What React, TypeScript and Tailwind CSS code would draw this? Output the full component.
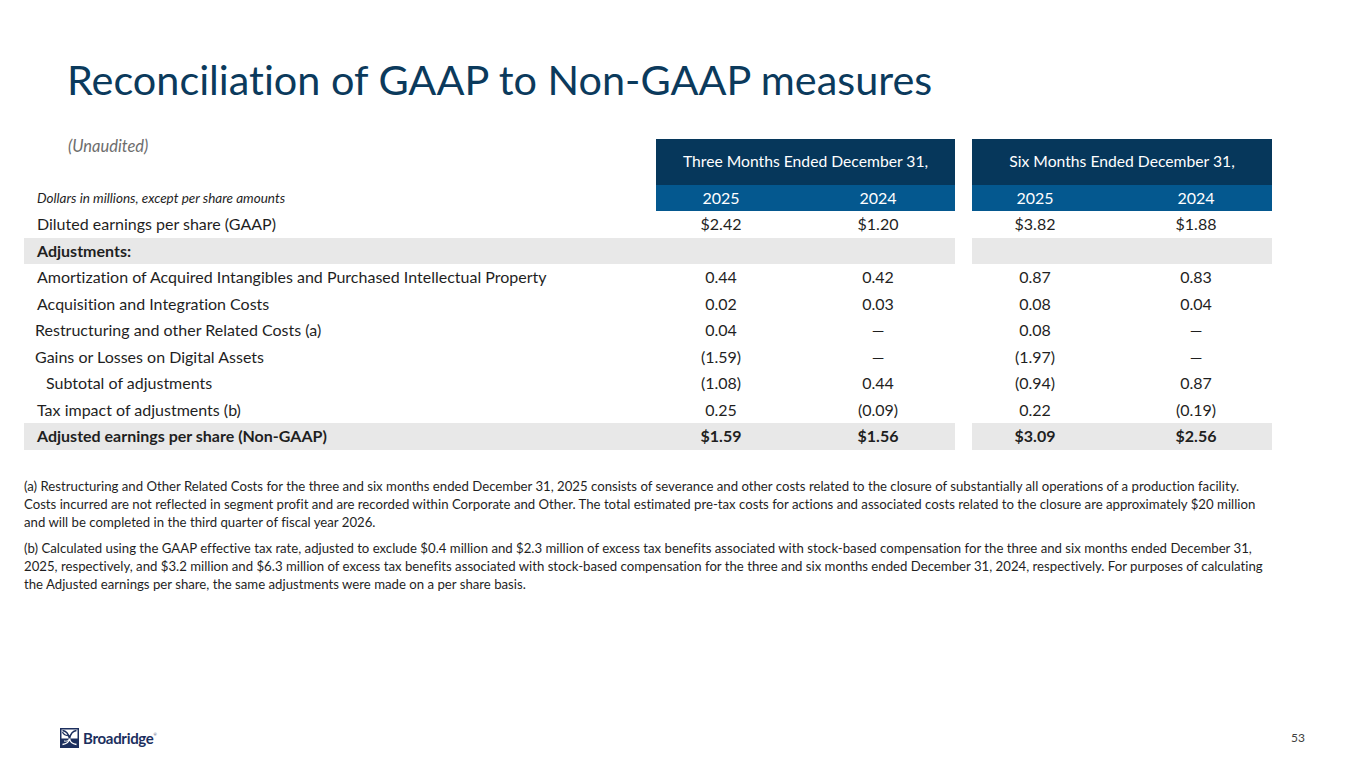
const rows: {
  label: string;
  pad: string;
  vals?: string[];
  gray?: boolean;
  bold?: boolean;
}[] = [
  { label: "Diluted earnings per share (GAAP)", pad: "pl-[13px]", vals: ["$2.42", "$1.20", "$3.82", "$1.88"] },
  { label: "Adjustments:", pad: "pl-[13px]", gray: true, bold: true },
  {
    label: "Amortization of Acquired Intangibles and Purchased Intellectual Property",
    pad: "pl-[13px]",
    vals: ["0.44", "0.42", "0.87", "0.83"],
  },
  { label: "Acquisition and Integration Costs", pad: "pl-[13px]", vals: ["0.02", "0.03", "0.08", "0.04"] },
  { label: "Restructuring and other Related Costs (a)", pad: "pl-[11px]", vals: ["0.04", "—", "0.08", "—"] },
  { label: "Gains or Losses on Digital Assets", pad: "pl-[11px]", vals: ["(1.59)", "—", "(1.97)", "—"] },
  { label: "Subtotal of adjustments", pad: "pl-[22px]", vals: ["(1.08)", "0.44", "(0.94)", "0.87"] },
  { label: "Tax impact of adjustments (b)", pad: "pl-[13px]", vals: ["0.25", "(0.09)", "0.22", "(0.19)"] },
  {
    label: "Adjusted earnings per share (Non-GAAP)",
    pad: "pl-[13px]",
    vals: ["$1.59", "$1.56", "$3.09", "$2.56"],
    gray: true,
    bold: true,
  },
];

function Logo() {
  return (
    <div className="flex items-center gap-[4px]">
      <svg width="19" height="20" viewBox="0 0 19 20">
        <rect x="0.75" y="0.75" width="17.5" height="18.5" fill="#fff" stroke="#1c2f5e" strokeWidth="1.5" />
        <rect x="0.75" y="10.5" width="17.5" height="8.75" fill="#1c2f5e" />
        <path d="M2.5 2.5 C7 3 8.5 6 9.5 10.5 M16.5 2.5 C12 3 10.5 6 9.5 10.5" stroke="#1c2f5e" strokeWidth="1.6" fill="none" />
        <path d="M9.5 8 C5 7.5 3 5.5 2.5 4" stroke="#1c2f5e" strokeWidth="1.1" fill="none" />
        <path d="M9.5 10.5 C9 14 6 16 2.5 16.5 M9.5 10.5 C10 14 13 16 16.5 16.5" stroke="#fff" strokeWidth="1.4" fill="none" />
        <path d="M4 13 C6 13.5 7.5 13 9 12" stroke="#fff" strokeWidth="1" fill="none" />
      </svg>
      <span className="text-[15px] font-bold text-[#1c2f5e] tracking-[-0.3px] leading-none">
        Broadridge<sup className="text-[4px] font-normal align-super">®</sup>
      </span>
    </div>
  );
}

export default function App() {
  return (
    <div className="w-[1365px] h-[768px] bg-white flex flex-col font-[Lato,sans-serif] [font-variant-ligatures:none] text-[#1f1f1f] overflow-hidden">
      <h1 className="pl-[67px] pt-[55px] text-[41.4px] leading-[48px] text-[#0b3a5c]">
        Reconciliation of GAAP to Non-GAAP measures
      </h1>

      <div className="ml-[24px] mt-[36px] text-[16px]">
        {/* header row 1 */}
        <div className="flex h-[46px]">
          <div className="w-[632px] pl-[44px] -mt-[5px] text-[16.5px] italic text-[#6d6d6d]">(Unaudited)</div>
          <div className="w-[299px] bg-[#06375b] text-white text-[15.7px] flex items-center justify-center">
            Three Months Ended December 31,
          </div>
          <div className="w-[17px]" />
          <div className="w-[300px] bg-[#06375b] text-white text-[15.7px] flex items-center justify-center">
            Six Months Ended December 31,
          </div>
        </div>
        {/* header row 2 */}
        <div className="flex h-[26px] items-center">
          <div className="w-[632px] pl-[13px] text-[13.5px] italic">Dollars in millions, except per share amounts</div>
          <div className="w-[299px] h-full bg-[#04588f] text-white text-[16px] flex items-center">
            <div className="w-[130px] text-center">2025</div>
            <div className="flex-1 pl-[15px] text-center">2024</div>
          </div>
          <div className="w-[17px]" />
          <div className="w-[300px] h-full bg-[#04588f] text-white text-[16px] flex items-center">
            <div className="w-[126px] text-center">2025</div>
            <div className="flex-1 pl-[22px] text-center">2024</div>
          </div>
        </div>

        {rows.map((r) => {
          const bg = r.gray ? "bg-[#e8e8e8]" : "";
          const wt = r.bold ? "font-bold" : "";
          return (
            <div key={r.label} className={`flex h-[26.5px] items-stretch ${wt}`}>
              <div className={`w-[632px] flex items-center ${r.pad} ${bg}`}>{r.label}</div>
              <div className={`w-[299px] flex items-center ${bg}`}>
                <div className="w-[130px] text-center">{r.vals?.[0]}</div>
                <div className="flex-1 pl-[15px] text-center">{r.vals?.[1]}</div>
              </div>
              <div className="w-[17px]" />
              <div className={`w-[300px] flex items-center ${bg}`}>
                <div className="w-[126px] text-center">{r.vals?.[2]}</div>
                <div className="flex-1 pl-[22px] text-center">{r.vals?.[3]}</div>
              </div>
            </div>
          );
        })}
      </div>

      <div className="ml-[24px] mt-[27px] text-[13.2px] leading-[18px] whitespace-nowrap">
        <p>
          (a) Restructuring and Other Related Costs for the three and six months ended December 31, 2025 consists of
          severance and other costs related to the closure of substantially all operations of a production facility.
          <br />
          Costs incurred are not reflected in segment profit and are recorded within Corporate and Other. The total
          estimated pre-tax costs for actions and associated costs related to the closure are approximately $20 million
          <br />
          and will be completed in the third quarter of fiscal year 2026.
        </p>
        <p className="mt-[8px]">
          (b) Calculated using the GAAP effective tax rate, adjusted to exclude $0.4 million and $2.3 million of excess
          tax benefits associated with stock-based compensation for the three and six months ended December 31,
          <br />
          2025, respectively, and $3.2 million and $6.3 million of excess tax benefits associated with stock-based
          compensation for the three and six months ended December 31, 2024, respectively. For purposes of calculating
          <br />
          the Adjusted earnings per share, the same adjustments were made on a per share basis.
        </p>
      </div>

      <div className="mt-auto flex items-center justify-between pl-[60px] pr-[60px] pb-[20px]">
        <Logo />
        <span className="text-[12px] text-[#404040]">53</span>
      </div>
    </div>
  );
}
